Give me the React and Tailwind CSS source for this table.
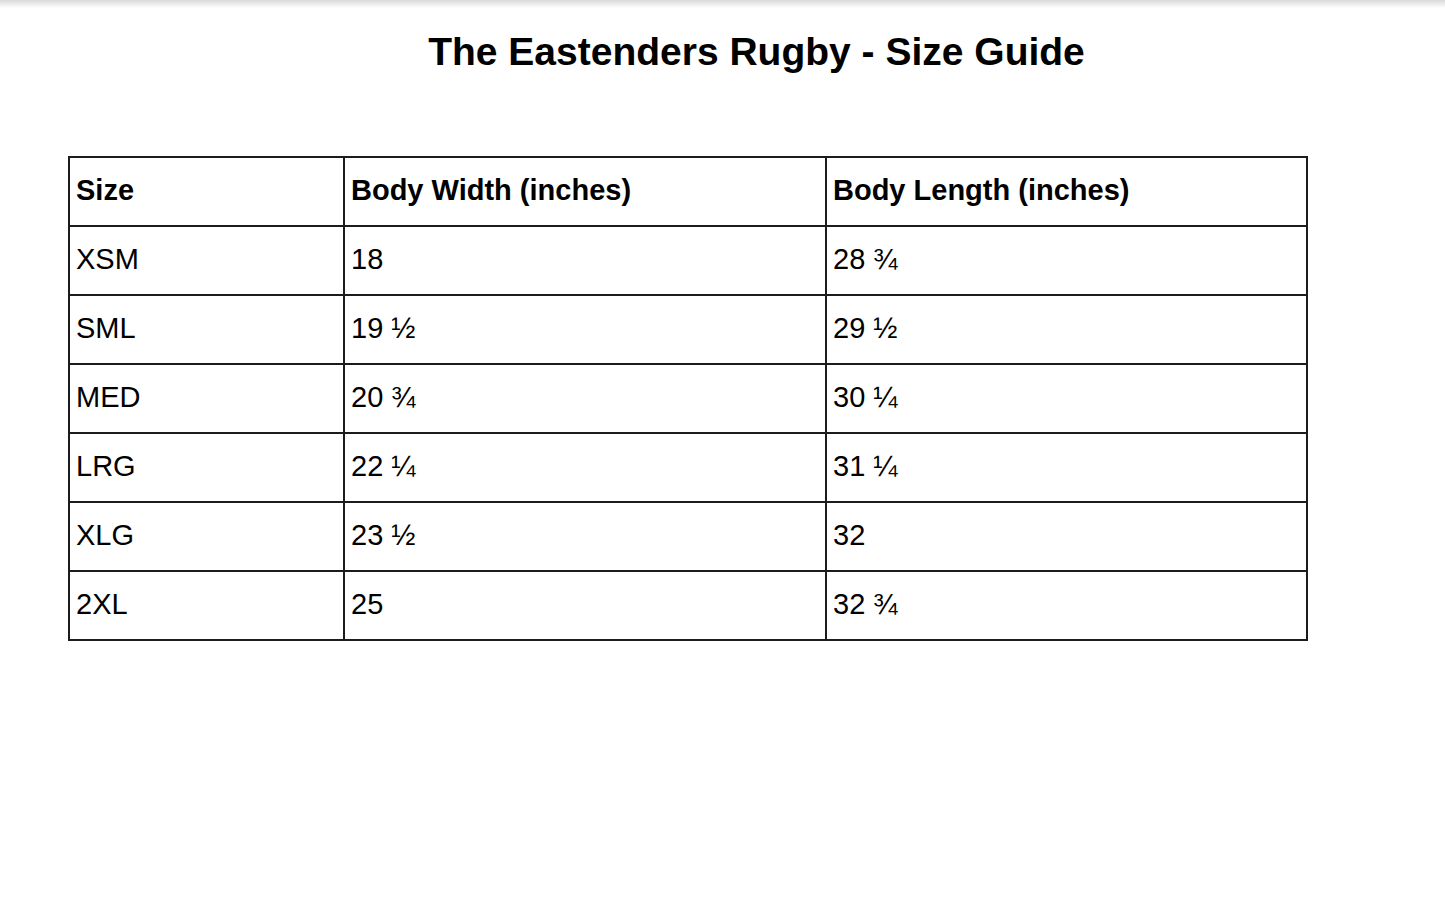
const rows = [
  ['XSM', '18', '28 ¾'],
  ['SML', '19 ½', '29 ½'],
  ['MED', '20 ¾', '30 ¼'],
  ['LRG', '22 ¼', '31 ¼'],
  ['XLG', '23 ½', '32'],
  ['2XL', '25', '32 ¾'],
];

const headers = ['Size', 'Body Width (inches)', 'Body Length (inches)'];

function Cell({ children, bold }) {
  return (
    <div
      className={`h-[69px] flex items-center pl-[6px] pb-[2px] border-r-2 border-b-2 border-[#1c1c1c] text-[29px] text-black ${bold ? 'font-bold' : ''}`}
    >
      {children}
    </div>
  );
}

export default function App() {
  return (
    <div className="min-h-screen bg-white" style={{ fontFamily: '"Liberation Sans", Arial, sans-serif' }}>
      <div className="h-2 bg-gradient-to-b from-[#d9d9d9] to-white" />

      <h1 className="mt-[25px] pl-[68px] text-center text-[39px] leading-[38px] font-bold text-black">
        The Eastenders Rugby - Size Guide
      </h1>

      <div className="mt-[85px] ml-[68px] w-[1240px] grid grid-cols-[275px_482px_481px] border-l-2 border-t-2 border-[#1c1c1c]">
        {headers.map((h) => (
          <Cell key={h} bold>
            {h}
          </Cell>
        ))}
        {rows.map((r) =>
          r.map((v, i) => <Cell key={r[0] + i}>{v}</Cell>)
        )}
      </div>
    </div>
  );
}
